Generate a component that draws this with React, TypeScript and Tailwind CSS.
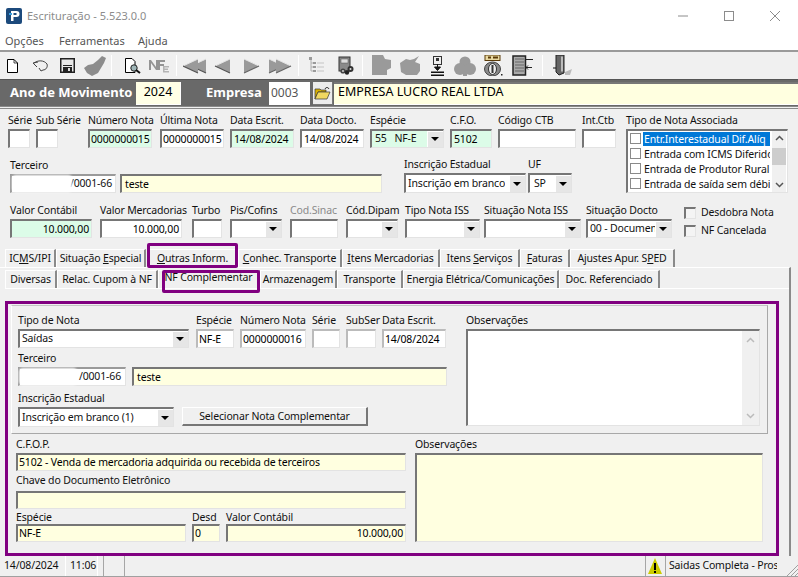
import React from "react";

const sunken = "border-t-2 border-l-2 border-t-[#767676] border-l-[#767676] border-b border-r border-b-[#e3e3e3] border-r-[#e3e3e3]";

function Inp({ v = "", c = "", bg = "bg-white", right = false }: { v?: string; c?: string; bg?: string; right?: boolean }) {
  return (
    <div className={`${sunken} ${bg} ${c} h-[19px] flex items-center overflow-hidden whitespace-nowrap px-[1px] leading-none text-[#000] ${right ? "justify-end" : ""}`}>
      {v}
    </div>
  );
}

function Combo({ v = "", c = "", h = "h-[19px]" }: { v?: string; c?: string; h?: string }) {
  return (
    <div className={`${sunken} bg-white ${c} ${h} flex items-center justify-between overflow-hidden whitespace-nowrap`}>
      <span className="pl-[2px] overflow-hidden">{v}</span>
      <span className="w-[16px] h-full shrink-0 bg-[#e6e6e6] border-l border-t border-white border-r-[#888] border-b-[#888] flex items-center justify-center">
        <svg width="9" height="5" viewBox="0 0 9 5"><path d="M0 0H8L4 4Z" fill="#000" /></svg>
      </span>
    </div>
  );
}

function F({ l, c = "", gray = false, tight = false, children }: { l: string; c?: string; gray?: boolean; tight?: boolean; children: React.ReactNode }) {
  return (
    <div className={`flex flex-col shrink-0 ${c}`}>
      <div className={`${tight ? "h-[14px]" : "h-[16px]"} leading-[14px] whitespace-nowrap ${gray ? "text-[#8a8a8a]" : ""}`}>{l}</div>
      {children}
    </div>
  );
}

function TB({ c = "", children }: { c?: string; children: React.ReactNode }) {
  return <div className={`shrink-0 flex items-center justify-center h-[24px] ${c}`}>{children}</div>;
}

const Sep = ({ c = "" }: { c?: string }) => <div className={`w-[1px] h-[21px] bg-[#a6a6a6] border-r border-white shrink-0 ${c}`} />;

function Tri({ x, dir }: { x: number; dir: "l" | "r" }) {
  return dir === "l" ? (
    <g transform={`translate(${x} 0)`}>
      <path d="M0 8L15 1V15Z" fill="#9a9a9a" />
      <path d="M0 8L15 1" stroke="#e4e4e4" strokeWidth="1" fill="none" />
      <path d="M0 8L15 15" stroke="#555" strokeWidth="1.2" fill="none" />
    </g>
  ) : (
    <g transform={`translate(${x} 0)`}>
      <path d="M15 8L0 1V15Z" fill="#9a9a9a" />
      <path d="M15 8L0 1" stroke="#e4e4e4" strokeWidth="1" fill="none" />
      <path d="M15 8L0 15" stroke="#666" strokeWidth="1.2" fill="none" />
    </g>
  );
}

function Arrows({ dir, n }: { dir: "l" | "r"; n: 1 | 2 }) {
  const w = n === 2 ? 24 : 17;
  return (
    <svg width={w} height="16" viewBox={`0 0 ${w} 16`}>
      {n === 2 ? (
        dir === "l" ? (
          <>
            <Tri x={8} dir="l" />
            <Tri x={0} dir="l" />
          </>
        ) : (
          <>
            <Tri x={1} dir="r" />
            <Tri x={8} dir="r" />
          </>
        )
      ) : (
        <Tri x={1} dir={dir} />
      )}
    </svg>
  );
}

function Tab({ t, u, c, rest = "" }: { t: string; u?: string; c: string; rest?: string }) {
  return (
    <div className={`shrink-0 ${c} flex items-center justify-center whitespace-nowrap border-r-2 border-r-[#8a8a8a] border-l border-l-white border-t border-t-white leading-none`}>
      {u !== undefined ? (
        <span>
          {t}
          <span className="underline">{u}</span>
          {rest}
        </span>
      ) : (
        t
      )}
    </div>
  );
}

function Redact({ c }: { c: string }) {
  return <div className={`absolute bg-white blur-[1px] rounded-[4px] ${c}`} />;
}

function CheckRow({ t, sel = false }: { t: string; sel?: boolean }) {
  return (
    <div className="h-[15px] flex items-center">
      <div className="w-[11px] h-[11px] border border-[#8a8a8a] bg-white shrink-0 mr-[2px] ml-[2px]" />
      <div className={`w-[127px] overflow-hidden whitespace-nowrap h-[14px] leading-[14px] pl-[1px] ${sel ? "bg-[#0078d7] text-white" : ""}`}>{t}</div>
    </div>
  );
}

function Chk({ t, c = "" }: { t: string; c?: string }) {
  return (
    <div className={`flex items-center ${c}`}>
      <div className={`w-[12px] h-[12px] ${sunken} bg-[#f4f4f4] shrink-0 mr-[5px]`} />
      {t}
    </div>
  );
}

export default function App() {
  return (
    <div className="relative w-[798px] h-[577px] overflow-hidden bg-[#f0f0f0] text-[10.5px] tracking-[-0.15px] text-[#111] font-['Noto_Sans',sans-serif] flex flex-col">
      {/* title bar */}
      <div className="h-[32px] bg-white flex items-center shrink-0">
        <svg className="ml-[6px]" width="16" height="16" viewBox="0 0 16 16">
          <rect width="16" height="16" rx="2" fill="#1c4a7c" />
          <path d="M5 3H10.5A3 3 0 0 1 10.5 9H7.5V13H5Z" fill="#fff" />
          <rect x="7.5" y="5" width="3" height="2" fill="#1c4a7c" />
          <rect x="3" y="5" width="3" height="2" fill="#3aa0e0" />
        </svg>
        <span className="ml-[5px] text-[11px] tracking-normal text-[#8c8c8c]">Escrituração - 5.523.0.0</span>
        <div className="ml-auto flex items-center">
          <svg width="12" height="12" viewBox="0 0 12 12" className="mr-[34px]"><path d="M1 6H11" stroke="#8c8c8c" /></svg>
          <svg width="12" height="12" viewBox="0 0 12 12" className="mr-[34px]"><rect x="1.5" y="1.5" width="9" height="9" fill="none" stroke="#8c8c8c" /></svg>
          <svg width="12" height="12" viewBox="0 0 12 12" className="mr-[17px]"><path d="M1 1L11 11M11 1L1 11" stroke="#8c8c8c" /></svg>
        </div>
      </div>
      {/* menu */}
      <div className="h-[18px] bg-white flex items-center shrink-0 text-[11px] tracking-normal text-[#555] pl-[5px]">
        <span className="w-[54px]">Opções</span>
        <span className="w-[79px]">Ferramentas</span>
        <span>Ajuda</span>
      </div>
      {/* toolbar */}
      <div className="h-[29px] shrink-0 border-t-2 border-[#9a9a9a] flex items-center pl-[4px]">
        <TB c="w-[16px]">
          <svg width="13" height="16" viewBox="0 0 13 16"><path d="M1.5 1.5H8L11.5 5V14.5H1.5Z" fill="#fff" stroke="#000" /><path d="M8 1.5V5H11.5" fill="none" stroke="#000" strokeWidth="0.7" /></svg>
        </TB>
        <TB c="w-[28px] ml-[6px]">
          <svg width="17" height="13" viewBox="0 0 17 13"><path d="M5 8L1 4L6 3M2 4C6 1 12 1 15 5C16 8 14 11 11 11L9 12L7 9" fill="none" stroke="#444" strokeWidth="1" /></svg>
        </TB>
        <TB c="w-[16px] ml-[5px]">
          <svg width="15" height="15" viewBox="0 0 15 15"><rect x="0.75" y="0.75" width="13.5" height="13.5" fill="#e8e8e8" stroke="#222" strokeWidth="1.5" /><path d="M3 7.5H12" stroke="#222" strokeWidth="1" /><rect x="3" y="9" width="9" height="5" fill="#222" /><rect x="8" y="10" width="2" height="3" fill="#ddd" /></svg>
        </TB>
        <TB c="w-[24px] ml-[8px]">
          <svg width="23" height="20" viewBox="0 0 23 20"><path d="M0 12L4 9L9 8L14 4L18 0L22 2L20 7L17 12L14 17L8 20L3 17Z" fill="#8c8c8c" /></svg>
        </TB>
        <Sep c="ml-[4px]" />
        <TB c="w-[20px] ml-[10px]">
          <svg width="17" height="17" viewBox="0 0 17 17"><path d="M1.5 1.5H8L11 4.5V15.5H1.5Z" fill="#fff" stroke="#000" /><circle cx="10" cy="11" r="3.2" fill="#9fb6b8" stroke="#222" /><path d="M12 13L16 16" stroke="#111" strokeWidth="2" /></svg>
        </TB>
        <TB c="w-[22px] ml-[6px]">
          <svg width="22" height="14" viewBox="0 0 22 14"><path d="M1 1H3L8 8V1H10V11H8L3 4V11H1ZM10 1H17V3H12V5H16V7H12V11H10Z" fill="#949494" /><path d="M15 7H21V8.5H16.5V9.5H20V11H16.5V12H21V13.5H15Z" fill="#b4b4b4" /></svg>
        </TB>
        <Sep c="ml-[6px]" />
        <TB c="w-[24px] ml-[6px]"><Arrows dir="l" n={2} /></TB>
        <TB c="w-[17px] ml-[7px]"><Arrows dir="l" n={1} /></TB>
        <TB c="w-[17px] ml-[12px]"><Arrows dir="r" n={1} /></TB>
        <TB c="w-[24px] ml-[8px]"><Arrows dir="r" n={2} /></TB>
        <Sep c="ml-[6px]" />
        <TB c="w-[16px] ml-[10px]">
          <svg width="16" height="17" viewBox="0 0 16 17"><path d="M2 2V14H6M2 6H6M2 10H6" fill="none" stroke="#b0b0b0" /><rect x="0" y="0" width="3" height="3" fill="#9a9a9a" /><rect x="4" y="5" width="3" height="2" fill="#9a9a9a" /><rect x="4" y="9" width="3" height="2" fill="#9a9a9a" /><rect x="4" y="13" width="3" height="2" fill="#9a9a9a" /><path d="M8 6H15M8 10H15M8 14H15" stroke="#c4c4c4" strokeWidth="1.2" /></svg>
        </TB>
        <TB c="w-[18px] ml-[12px]">
          <svg width="17" height="19" viewBox="0 0 17 19"><rect x="1" y="1" width="11" height="14" fill="#8a8a8a" stroke="#333" /><rect x="3" y="3" width="7" height="4" fill="#ddd" stroke="#555" strokeWidth="0.5" /><circle cx="5" cy="15" r="2.6" fill="#444" /><circle cx="12.5" cy="13" r="3" fill="#333" /><circle cx="9" cy="16.5" r="2.2" fill="#222" /><circle cx="12.5" cy="13" r="1" fill="#ddd" /><circle cx="5" cy="15" r="0.9" fill="#ddd" /></svg>
        </TB>
        <Sep c="ml-[7px]" />
        <TB c="w-[20px] ml-[9px]">
          <svg width="20" height="21" viewBox="0 0 20 21"><path d="M0 0H11L13 4L19 5V13L15 15V20H0Z" fill="#9a9a9a" /></svg>
        </TB>
        <TB c="w-[20px] ml-[8px]">
          <svg width="20" height="19" viewBox="0 0 20 19"><path d="M0 7L6 3L10 4L14 3L19 0L15 6L20 8V15L17 19H6L1 16Z" fill="#9a9a9a" /></svg>
        </TB>
        <TB c="w-[14px] ml-[11px]">
          <svg width="14" height="20" viewBox="0 0 14 20"><rect x="2.5" y="0.5" width="8" height="8" fill="#eee" stroke="#333" /><rect x="5" y="2" width="3" height="3" fill="#333" /><path d="M6.5 8V11M3.5 11H9.5L6.5 14.5Z" fill="#111" stroke="#111" /><rect x="0" y="15.5" width="13" height="1.5" fill="#111" /><rect x="0" y="18.5" width="13" height="1.5" fill="#111" /></svg>
        </TB>
        <TB c="w-[22px] ml-[9px]">
          <svg width="22" height="20" viewBox="0 0 22 20"><circle cx="11" cy="6" r="5.5" fill="#9a9a9a" /><circle cx="6" cy="13" r="6" fill="#9a9a9a" /><circle cx="16" cy="13" r="6" fill="#9a9a9a" /><rect x="9" y="10" width="4" height="10" fill="#9a9a9a" /></svg>
        </TB>
        <TB c="w-[20px] ml-[7px]">
          <svg width="20" height="21" viewBox="0 0 20 21"><rect x="2" y="0" width="15" height="5.5" fill="#e8d8a0" stroke="#5a3a08" /><path d="M5 2.5H8M10 2.5H15" stroke="#5a3a08" strokeWidth="2" /><ellipse cx="9.5" cy="14" rx="8" ry="7" fill="#8a8a8a" stroke="#444" /><ellipse cx="9.5" cy="14" rx="4" ry="5.5" fill="#eee" stroke="#333" /><rect x="8.5" y="10" width="2" height="8" fill="#333" /><rect x="18" y="19" width="1.5" height="1.5" fill="#222" /></svg>
        </TB>
        <TB c="w-[21px] ml-[9px]">
          <svg width="21" height="21" viewBox="0 0 21 21"><rect x="1" y="1" width="12.5" height="19" fill="#aaa" stroke="#222" strokeWidth="1.5" /><path d="M3 4H12M3 7H12M3 10H12M3 13H12M3 16H12" stroke="#666" /><path d="M13 4.5H21M13 12.5H20M16 10.5L14 12.5L16 14.5" fill="none" stroke="#222" /></svg>
        </TB>
        <Sep c="ml-[9px]" />
        <TB c="w-[20px] ml-[10px]">
          <svg width="20" height="22" viewBox="0 0 20 22"><path d="M3 0H11V18L6 20L3 17Z" fill="#666" stroke="#222" /><rect x="8" y="1.5" width="2" height="15" fill="#bbb" /><path d="M0 13H3" stroke="#111" /><path d="M12 17L19 14L17 20H12Z" fill="#bbb" /></svg>
        </TB>
      </div>
      {/* ano bar */}
      <div className="h-[27px] shrink-0 bg-[#696969] flex items-center pl-[10px] border-t border-[#555] tracking-normal">
        <span className="text-white font-bold text-[13px] w-[125px] pb-[1px]">Ano de Movimento</span>
        <div className="ml-[1px] w-[45px] h-[23px] bg-[#ffffe6] border-r border-b border-white flex items-center justify-center text-[12.5px] text-[#000] pb-[1px]">2024</div>
        <span className="ml-[25px] w-[63px] text-white font-bold text-[13px] pb-[1px]">Empresa</span>
        <div className="w-[41px] h-[23px] bg-white flex items-center pl-[2px] text-[12px] text-[#555] pb-[1px]">0003</div>
        <div className="ml-[3px] w-[20px] h-[23px] bg-[#ececec] border-r border-b border-[#777] flex items-center justify-center">
          <svg width="17" height="14" viewBox="0 0 17 14"><path d="M1 3H6L7 4H12V6H4L1 13Z" fill="#d8b000" stroke="#333" strokeWidth="0.7" /><path d="M1 13L4 6H16L13 13Z" fill="#f0d860" stroke="#333" strokeWidth="0.7" /><path d="M11 3C12 1 14 1 15 3" fill="none" stroke="#111" /></svg>
        </div>
        <div className="ml-[1px] flex-1 h-[23px] bg-[#ffffe0] border-t-2 border-t-[#777] border-b border-b-white flex items-center pl-[4px] text-[12.5px] text-[#000] pb-[2px]">EMPRESA LUCRO REAL LTDA</div>
      </div>
      <div className="h-[3px] shrink-0 border-y border-[#8a8a8a]" />
      {/* form */}
      <div className="flex shrink-0 mt-[4px]">
        <div className="w-[620px] shrink-0">
          <div className="flex pl-[8px] h-[36px]">
            <F l="Série" c="w-[22px]"><Inp /></F>
            <F l="Sub Série" c="w-[22px] ml-[6px]"><Inp /></F>
            <F l="Número Nota" c="w-[64px] ml-[30px]"><Inp v="0000000015" bg="bg-[#dcfce8]" /></F>
            <F l="Última Nota" c="w-[64px] ml-[8px]"><Inp v="0000000015" /></F>
            <F l="Data Escrit." c="w-[64px] ml-[6px]"><Inp v="14/08/2024" bg="bg-[#dcfce8]" c="pl-[2px]" /></F>
            <F l="Data Docto." c="w-[64px] ml-[6px]"><Inp v="14/08/2024" c="pl-[2px]" /></F>
            <F l="Espécie" c="w-[74px] ml-[6px]">
              <div className={`${sunken} bg-[#dcfce8] h-[19px] flex items-center justify-between`}>
                <span className="pl-[3px] whitespace-pre">55   NF-E</span>
                <span className="w-[16px] h-full bg-[#e6e6e6] border-l border-t border-white flex items-center justify-center">
                  <svg width="9" height="5" viewBox="0 0 9 5"><path d="M0 0H8L4 4Z" fill="#000" /></svg>
                </span>
              </div>
            </F>
            <F l="C.F.O." c="w-[42px] ml-[6px]"><Inp v="5102" bg="bg-[#dcfce8]" c="pl-[2px]" /></F>
            <F l="Código CTB" c="w-[78px] ml-[6px]"><Inp /></F>
            <F l="Int.Ctb" c="w-[34px] ml-[6px]"><Inp /></F>
          </div>
          <div className="flex mt-[8px] pl-[10px]">
            <F l="Terceiro" c="w-[106px] pt-[1px]">
              <div className="relative">
                <Inp c="!border-t-[#9a9a9a] !border-l-[#9a9a9a]" />
                <div className="absolute inset-0 flex items-center justify-end pr-[4px]">/0001-66</div>
                <Redact c="left-[2px] top-[1px] w-[60px] h-[17px]" />
              </div>
            </F>
            <F l="" c="w-[262px] ml-[4px] pt-[1px]"><Inp v="teste" bg="bg-[#ffffe0]" c="pl-[3px]" /></F>
            <F l="Inscrição Estadual" c="w-[122px] ml-[22px]"><Combo v="Inscrição em branco" h="h-[20px]" /></F>
            <F l="UF" c="w-[44px] ml-[2px]"><Combo v="SP" h="h-[20px]" c="pl-[2px]" /></F>
          </div>
        </div>
        <F l="Tipo de Nota Associada" c="w-[162px] ml-[6px]">
          <div className={`${sunken} bg-white h-[64px] flex`}>
            <div className="w-[144px] shrink-0">
              <CheckRow t="Entr.Interestadual Dif.Alíq" sel />
              <CheckRow t="Entrada com ICMS Diferido" />
              <CheckRow t="Entrada de Produtor Rural" />
              <CheckRow t="Entrada de saída sem débito" />
            </div>
            <div className="w-[14px] shrink-0 bg-[#f0f0f0] flex flex-col items-center justify-between py-[4px] relative">
              <svg width="9" height="6" viewBox="0 0 9 6"><path d="M1 5L4.5 1.5L8 5" fill="none" stroke="#555" strokeWidth="1.5" /></svg>
              <div className="absolute top-[17px] left-0 w-[14px] h-[17px] bg-[#cdcdcd]" />
              <svg width="9" height="6" viewBox="0 0 9 6"><path d="M1 1L4.5 4.5L8 1" fill="none" stroke="#555" strokeWidth="1.5" /></svg>
            </div>
          </div>
        </F>
      </div>
      <div className="flex mt-[10px] pl-[10px] shrink-0 h-[36px]">
        <F l="Valor Contábil" c="w-[82px]"><Inp v="10.000,00" bg="bg-[#dcfce8]" right c="pr-[2px]" /></F>
        <F l="Valor Mercadorias" c="w-[82px] ml-[8px]"><Inp v="10.000,00" right c="pr-[2px]" /></F>
        <F l="Turbo" c="w-[30px] ml-[10px]"><Inp /></F>
        <F l="Pis/Cofins" c="w-[52px] ml-[8px]"><Combo /></F>
        <F l="Cod.Sinac" c="w-[48px] ml-[8px]" gray><Inp /></F>
        <F l="Cód.Dipam" c="w-[52px] ml-[8px]"><Combo /></F>
        <F l="Tipo Nota ISS" c="w-[75px] ml-[7px]"><Combo /></F>
        <F l="Situação Nota ISS" c="w-[97px] ml-[4px]"><Combo /></F>
        <F l="Situação Docto" c="w-[86px] ml-[5px]"><Combo v="00 - Documento" /></F>
        <div className="flex flex-col ml-[12px] mt-[2px]">
          <Chk t="Desdobra Nota" c="h-[17px]" />
          <Chk t="NF Cancelada" c="h-[17px] mt-[2px]" />
        </div>
      </div>
      {/* tabs row 1 */}
      <div className="flex items-stretch h-[18px] mt-[10px] pl-[5px] shrink-0">
        <Tab t="IC" u="M" rest="S/IPI" c="w-[51px]" />
        <Tab t="Situação " u="E" rest="special" c="w-[90px]" />
        <Tab t="" u="O" rest="utras Inform." c="w-[90px] ml-[2px]" />
        <Tab t="" u="C" rest="onhec. Transporte" c="w-[104px]" />
        <Tab t="" u="I" rest="tens Mercadorias" c="w-[98px]" />
        <Tab t="Itens " u="S" rest="erviços" c="w-[80px]" />
        <Tab t="" u="F" rest="aturas" c="w-[50px]" />
        <Tab t="Ajustes Apur. S" u="P" rest="ED" c="w-[105px]" />
      </div>
      {/* tab panel */}
      <div className="flex-1 min-h-0 mr-[7px] border-r-2 border-r-[#8a8a8a] border-t border-t-[#fff] pl-[5px]">
        <div className="flex items-stretch h-[19px] mt-[2px] border-b border-b-white">
          <Tab t="Diversas" c="w-[52px]" />
          <Tab t="Relac. Cupom à NF" c="w-[101px]" />
          <Tab t="NF Complementar" c="w-[102px] pb-[4px]" />
          <Tab t="Armazenagem" c="w-[77px]" />
          <Tab t="Transporte" c="w-[66px]" />
          <Tab t="Energia Elétrica/Comunicações" c="w-[156px]" />
          <Tab t="Doc. Referenciado" c="w-[101px]" />
        </div>
        {/* purple panel */}
        <div className="mt-[12px] w-[774px] h-[255px] border-[3px] border-[#800080] pl-[3px] pt-[1px]">
          <div className="h-[129px] w-[757px] border border-[#a8a8a8] border-l-white border-t-[#c4c4c4] flex">
            <div className="w-[449px] shrink-0 pl-[6px] pt-[7px]">
              <div className="flex h-[36px]">
                <F l="Tipo de Nota" c="w-[171px]"><Combo v="Saídas" /></F>
                <F l="Espécie" c="w-[38px] ml-[7px]"><Inp v="NF-E" c="!border-t-[#bbb] !border-l-[#bbb]" /></F>
                <F l="Número Nota" c="w-[66px] ml-[6px]"><Inp v="0000000016" c="!border-t-[#bbb] !border-l-[#bbb]" /></F>
                <F l="Série" c="w-[28px] ml-[6px]"><Inp c="!border-t-[#bbb] !border-l-[#bbb]" /></F>
                <F l="SubSer" c="w-[30px] ml-[6px]"><Inp c="!border-t-[#bbb] !border-l-[#bbb]" /></F>
                <F l="Data Escrit." c="w-[64px] ml-[6px]"><Inp v="14/08/2024" c="!border-t-[#bbb] !border-l-[#bbb]" /></F>
              </div>
              <div className="h-[14px] leading-[14px] mt-[2px]">Terceiro</div>
              <div className="flex mt-[2px]">
                <div className="relative w-[108px]">
                  <Inp c="!border-t-[#9a9a9a] !border-l-[#9a9a9a]" />
                  <div className="absolute inset-0 flex items-center justify-end pr-[5px]">/0001-66</div>
                  <Redact c="left-[1px] top-[1px] w-[58px] h-[17px]" />
                </div>
                <Inp v="teste" bg="bg-[#ffffe0]" c="w-[315px] ml-[6px] pl-[3px]" />
              </div>
              <div className="h-[14px] leading-[14px] mt-[5px]">Inscrição Estadual</div>
              <div className="flex mt-[2px] items-start">
                <Combo v="Inscrição em branco (1)" c="w-[156px]" h="h-[20px]" />
                <button className="ml-[8px] w-[186px] h-[19px] bg-[#f0f0f0] border border-t-white border-l-white border-r-2 border-b-2 border-r-[#777] border-b-[#777] leading-none text-[#111]">Selecionar Nota Complementar</button>
              </div>
            </div>
            <div className="ml-[5px] pt-[7px]">
              <div className="h-[16px] leading-[14px]">Observações</div>
              <div className={`${sunken} bg-white w-[294px] h-[97px] flex justify-end`}>
                <div className="w-[17px] bg-[#f0f0f0] flex flex-col items-center justify-between py-[6px]">
                  <svg width="9" height="6" viewBox="0 0 9 6"><path d="M1 5L4.5 1.5L8 5" fill="none" stroke="#bbb" strokeWidth="1.5" /></svg>
                  <svg width="9" height="6" viewBox="0 0 9 6"><path d="M1 1L4.5 4.5L8 1" fill="none" stroke="#bbb" strokeWidth="1.5" /></svg>
                </div>
              </div>
            </div>
          </div>
          <div className="flex pl-[5px] pt-[3px]">
            <div className="w-[390px] shrink-0">
              <div className="h-[16px] leading-[14px]">C.F.O.P.</div>
              <Inp v="5102 - Venda de mercadoria adquirida ou recebida de terceiros" bg="bg-[#ffffe0]" c="!h-[18px]" />
              <div className="h-[14px] leading-[14px] mt-[2px]">Chave do Documento Eletrônico</div>
              <Inp bg="bg-[#ffffe0]" c="mt-[4px] !h-[18px]" />
              <div className="flex mt-[1px]">
                <F tight l="Espécie" c="w-[170px]"><Inp v="NF-E" bg="bg-[#ffffe0]" c="!h-[18px]" /></F>
                <F tight l="Desd" c="w-[28px] ml-[6px]"><Inp v="0" bg="bg-[#ffffe0]" c="!h-[18px]" /></F>
                <F tight l="Valor Contábil" c="w-[180px] ml-[6px]"><Inp v="10.000,00" bg="bg-[#ffffe0]" right c="!h-[18px] pr-[2px]" /></F>
              </div>
            </div>
            <div className="ml-[9px]">
              <div className="h-[16px] leading-[14px]">Observações</div>
              <div className={`${sunken} bg-[#ffffe0] w-[348px] h-[89px]`} />
            </div>
          </div>
        </div>
      </div>
      {/* status bar */}
      <div className="h-[21px] shrink-0 flex items-center border-b border-[#a0a0a0] relative">
        <span className="w-[65px] pl-[4px]">14/08/2024</span>
        <span className="w-[33px] pl-[4px] h-full flex items-center border-x border-white">11:06</span>
        <div className="h-full w-[1px] bg-[#a6a6a6] ml-[5px]" />
        <div className="h-full w-[1px] bg-[#a6a6a6] ml-[20px]" />
        <div className="h-full w-[1px] bg-[#a6a6a6] ml-[520px]" />
        <div className="w-[18px] h-full flex items-center justify-center">
          <svg width="14" height="16" viewBox="0 0 14 16"><path d="M7 0L14 16H0Z" fill="#cccc00" /><rect x="6" y="5" width="2" height="7" fill="#000" /><rect x="6" y="13" width="2" height="2" fill="#000" /></svg>
        </div>
        <div className="h-full w-[1px] bg-[#a6a6a6] ml-[1px]" />
        <span className="ml-[3px] w-[108px] overflow-hidden whitespace-nowrap">Saidas Completa - Prospect</span>
        <svg className="absolute right-0 bottom-0" width="12" height="12" viewBox="0 0 12 12"><path d="M12 1L1 12M12 5L5 12M12 9L9 12" stroke="#a0a0a0" /></svg>
      </div>
      {/* annotation boxes */}
      <div className="absolute left-[147px] top-[243px] w-[91px] h-[25px] border-[3px] border-[#800080] rounded-[2px]" />
      <div className="absolute left-[162px] top-[270px] w-[98px] h-[23px] border-[3px] border-[#800080] rounded-[2px]" />
    </div>
  );
}
